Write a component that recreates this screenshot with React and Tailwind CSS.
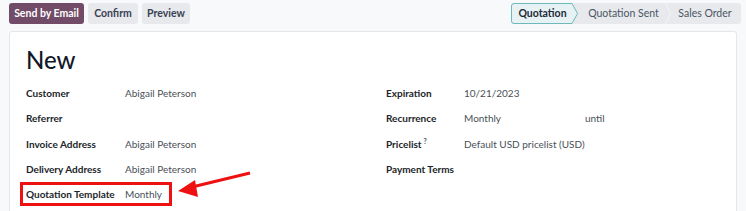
import React from "react";

const font = { fontFamily: 'Lato, "Noto Sans", Arial, sans-serif' };

function Row({ label, value }) {
  return (
    <div className="flex items-center h-[25.25px] whitespace-nowrap">
      <div className="w-[99px] shrink-0 font-bold text-[#212529]">{label}</div>
      <div className="text-[#495057]">{value}</div>
    </div>
  );
}

export default function App() {
  return (
    <div className="w-[746px] h-[211px] bg-[#f8f9fa] overflow-hidden relative text-[10px]" style={font}>
      <div className="flex justify-between items-start px-[9px] pt-[3px]">
        <div className="flex gap-[4px] text-[10.5px] font-bold">
          <div className="h-[21px] w-[75px] flex items-center justify-center rounded-[3px] bg-[#714b67] text-white">Send by Email</div>
          <div className="h-[21px] w-[50px] flex items-center justify-center rounded-[3px] bg-[#e7e9ed] text-[#374151]">Confirm</div>
          <div className="h-[21px] w-[48px] flex items-center justify-center rounded-[3px] bg-[#e7e9ed] text-[#374151]">Preview</div>
        </div>
        <div className="flex h-[21px] w-[230px] rounded-[3px] bg-[#e7e9ed] text-[10.5px] mr-[-4px] whitespace-nowrap">
          <div className="relative w-[67px] flex items-center justify-center font-bold text-[#1f2937]">
            <svg className="absolute inset-0" width="67" height="21" viewBox="0 0 67 21">
              <path d="M3 0.5 H61 L66.5 10.5 L61 20.5 H3 Q0.5 20.5 0.5 18 V3 Q0.5 0.5 3 0.5 Z" fill="#e6f2f3" stroke="#6fb9bd" strokeWidth="1" />
            </svg>
            <span className="relative pr-[4px]">Quotation</span>
          </div>
          <div className="relative w-[91px] flex items-center justify-center text-[#4b5563]">
            <span>Quotation Sent</span>
            <svg className="absolute right-[-2px] top-0" width="6" height="21" viewBox="0 0 6 21">
              <path d="M0.5 0 L5.5 10.5 L0.5 21" fill="none" stroke="#f3f4f6" strokeWidth="1" />
            </svg>
          </div>
          <div className="flex-1 flex items-center justify-center text-[#4b5563]">Sales Order</div>
        </div>
      </div>

      <div className="mx-[9px] mt-[7px] h-[200px] bg-white border border-[#e5e7eb] rounded-[3px] pl-[16px] pt-[11px]">
        <div className="text-[24px] leading-[34px] text-[#111827] font-medium">New</div>
        <div className="flex mt-[4px]">
          <div className="w-[360px] relative">
            <Row label="Customer" value="Abigail Peterson" />
            <Row label="Referrer" value="" />
            <Row label="Invoice Address" value="Abigail Peterson" />
            <Row label="Delivery Address" value="Abigail Peterson" />
            <Row label="Quotation Template" value="Monthly" />
            <div className="absolute left-[-6px] top-[101px] w-[152px] h-[24px] border-[3px] border-[#ee1111]" />
          </div>
          <div className="flex-1 whitespace-nowrap">
            <div className="flex items-center h-[25.25px]">
              <div className="w-[78px] font-bold text-[#212529]">Expiration</div>
              <div className="text-[#495057]">10/21/2023</div>
            </div>
            <div className="flex items-center h-[25.25px]">
              <div className="w-[78px] font-bold text-[#212529]">Recurrence</div>
              <div className="text-[#495057] w-[121px]">Monthly</div>
              <div className="text-[#495057]">until</div>
            </div>
            <div className="flex items-center h-[25.25px]">
              <div className="w-[78px] font-bold text-[#212529]">
                Pricelist<sup className="text-[7px] ml-[2px] text-[#495057]">?</sup>
              </div>
              <div className="text-[#495057]">Default USD pricelist (USD)</div>
            </div>
            <div className="flex items-center h-[25.25px]">
              <div className="w-[78px] font-bold text-[#212529]">Payment Terms</div>
            </div>
          </div>
        </div>
      </div>

      <svg className="absolute left-0 top-0 pointer-events-none" width="746" height="211" viewBox="0 0 746 211">
        <line x1="250" y1="173" x2="192" y2="187" stroke="#ee1111" strokeWidth="3" />
        <polygon points="178,191 195,180 198,197" fill="#ee1111" />
      </svg>
    </div>
  );
}
